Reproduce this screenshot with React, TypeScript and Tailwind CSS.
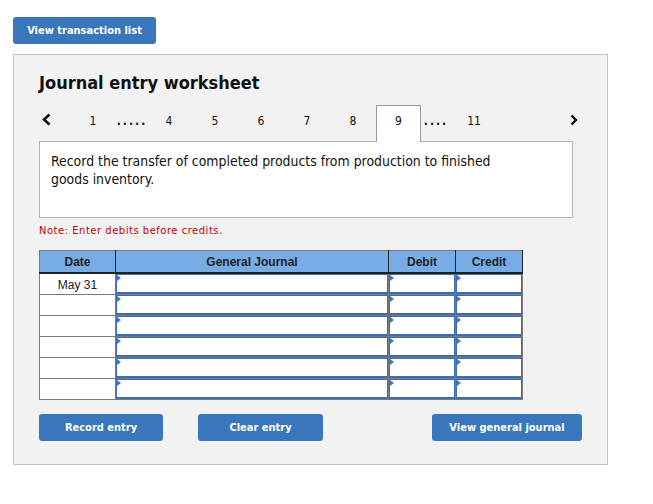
import React from "react";

const F = { fontFamily: '"DejaVu Sans Condensed", "DejaVu Sans", sans-serif' };

function Btn({ label, w }: { label: string; w: string }) {
  return (
    <button
      className={`block h-[27px] ${w} rounded-[3px] bg-[#3a76bb] pt-[2px] text-[11px] font-bold text-white`}
      style={F}
    >
      {label}
    </button>
  );
}

function InputCell() {
  return (
    <div className="relative h-[20px] border border-b-2 border-[#3d6db0] bg-white">
      <span className="absolute left-0 top-0 h-0 w-0 border-y-[3px] border-l-[4px] border-y-transparent border-l-[#3a78c8]" />
    </div>
  );
}

export default function App() {
  const nums = ["4", "5", "6", "7", "8"];
  const rows = ["May 31", "", "", "", "", ""];
  return (
    <div className="min-h-[504px] w-[653px] bg-white pl-[13px] pt-[17px]" style={F}>
      <Btn label="View transaction list" w="w-[143px]" />
      <div className="mt-[10px] h-[411px] w-[595px] border border-[#c3c3c3] bg-[#f2f2f2] pl-[25px] pr-[33px]">
        <h1 className="mt-[16px] text-[18px] font-bold leading-[24px] text-[#111]">
          Journal entry worksheet
        </h1>
        <div className="mt-[10px] flex h-[36px] w-[546px] items-stretch text-[12px] text-[#111]">
          <div className="flex w-[31px] items-center pb-[7px] pl-[3px]">
            <svg width="9" height="13" viewBox="0 0 9 13">
              <polyline points="7.5,1.5 2,6.5 7.5,11.5" fill="none" stroke="#111" strokeWidth="2.6" />
            </svg>
          </div>
          <div className="flex w-[46px] items-center justify-center pb-[5px]">1</div>
          <div className="flex w-[30px] items-center justify-center pb-[5px] pl-[2px] font-bold tracking-[2px]">.....</div>
          {nums.map((n) => (
            <div key={n} className="flex w-[46px] items-center justify-center pb-[5px]">
              {n}
            </div>
          ))}
          <div className="relative z-10 flex h-[37px] w-[45px] items-center justify-center border border-b-0 border-[#9a9a9a] bg-white pb-[6px]">
            9
          </div>
          <div className="flex w-[30px] items-center justify-center pb-[5px] font-bold tracking-[2px]">....</div>
          <div className="flex w-[46px] items-center justify-center pb-[5px]">11</div>
          <div className="ml-auto flex w-[22px] items-center justify-center pb-[7px]">
            <svg width="8" height="12" viewBox="0 0 8 12">
              <polyline points="1.5,1.5 6,6 1.5,10.5" fill="none" stroke="#111" strokeWidth="2.4" />
            </svg>
          </div>
        </div>
        <div className="h-[77px] w-[534px] border border-[#b4b4b4] bg-white px-[11px] pt-[10px] text-[13.9px] leading-[18px] text-[#111]">
          Record the transfer of completed products from production to finished
          <br />
          goods inventory.
        </div>
        <div className="mt-[6px] text-[11px] leading-[14px] tracking-[0.56px] text-[#c00000]">
          Note: Enter debits before credits.
        </div>
        <table
          className="mt-[12px] border-collapse text-[12px] text-[#222]"
          style={{ fontFamily: '"Liberation Sans", Arial, sans-serif', tableLayout: "fixed", width: 484 }}
        >
          <colgroup>
            <col style={{ width: 76 }} />
            <col style={{ width: 273 }} />
            <col style={{ width: 67 }} />
            <col style={{ width: 67 }} />
          </colgroup>
          <thead>
            <tr className="h-[22px] bg-[#78ace5] font-bold">
              <th className="border-t border-l border-b-2 border-t-[#7a7a7a] border-l-[#7a7a7a] border-b-[#222] border-r border-r-[#222] p-0 pt-[1px] font-bold">Date</th>
              <th className="border-t border-b-2 border-t-[#7a7a7a] border-b-[#222] border-r border-r-[#222] p-0 pt-[1px] font-bold">General Journal</th>
              <th className="border-t border-b-2 border-t-[#7a7a7a] border-b-[#222] border-r border-r-[#222] p-0 pt-[1px] font-bold">Debit</th>
              <th className="border-t border-b-2 border-t-[#7a7a7a] border-b-[#222] border-r border-r-[#222] p-0 pt-[1px] font-bold">Credit</th>
            </tr>
          </thead>
          <tbody>
            {rows.map((d, i) => (
              <tr key={i} className="h-[21px]">
                <td className="border border-[#7a7a7a] bg-white p-0 pt-[2px] text-center align-middle">{d}</td>
                <td className="border border-[#7a7a7a] bg-white p-0 align-top"><InputCell /></td>
                <td className="border border-[#7a7a7a] bg-white p-0 align-top"><InputCell /></td>
                <td className="border border-[#7a7a7a] bg-white p-0 align-top"><InputCell /></td>
              </tr>
            ))}
          </tbody>
        </table>
        <div className="mt-[14px] flex w-[543px] items-center">
          <Btn label="Record entry" w="w-[124px]" />
          <div className="ml-[35px]">
            <Btn label="Clear entry" w="w-[125px]" />
          </div>
          <div className="ml-auto">
            <Btn label="View general journal" w="w-[150px]" />
          </div>
        </div>
      </div>
    </div>
  );
}
